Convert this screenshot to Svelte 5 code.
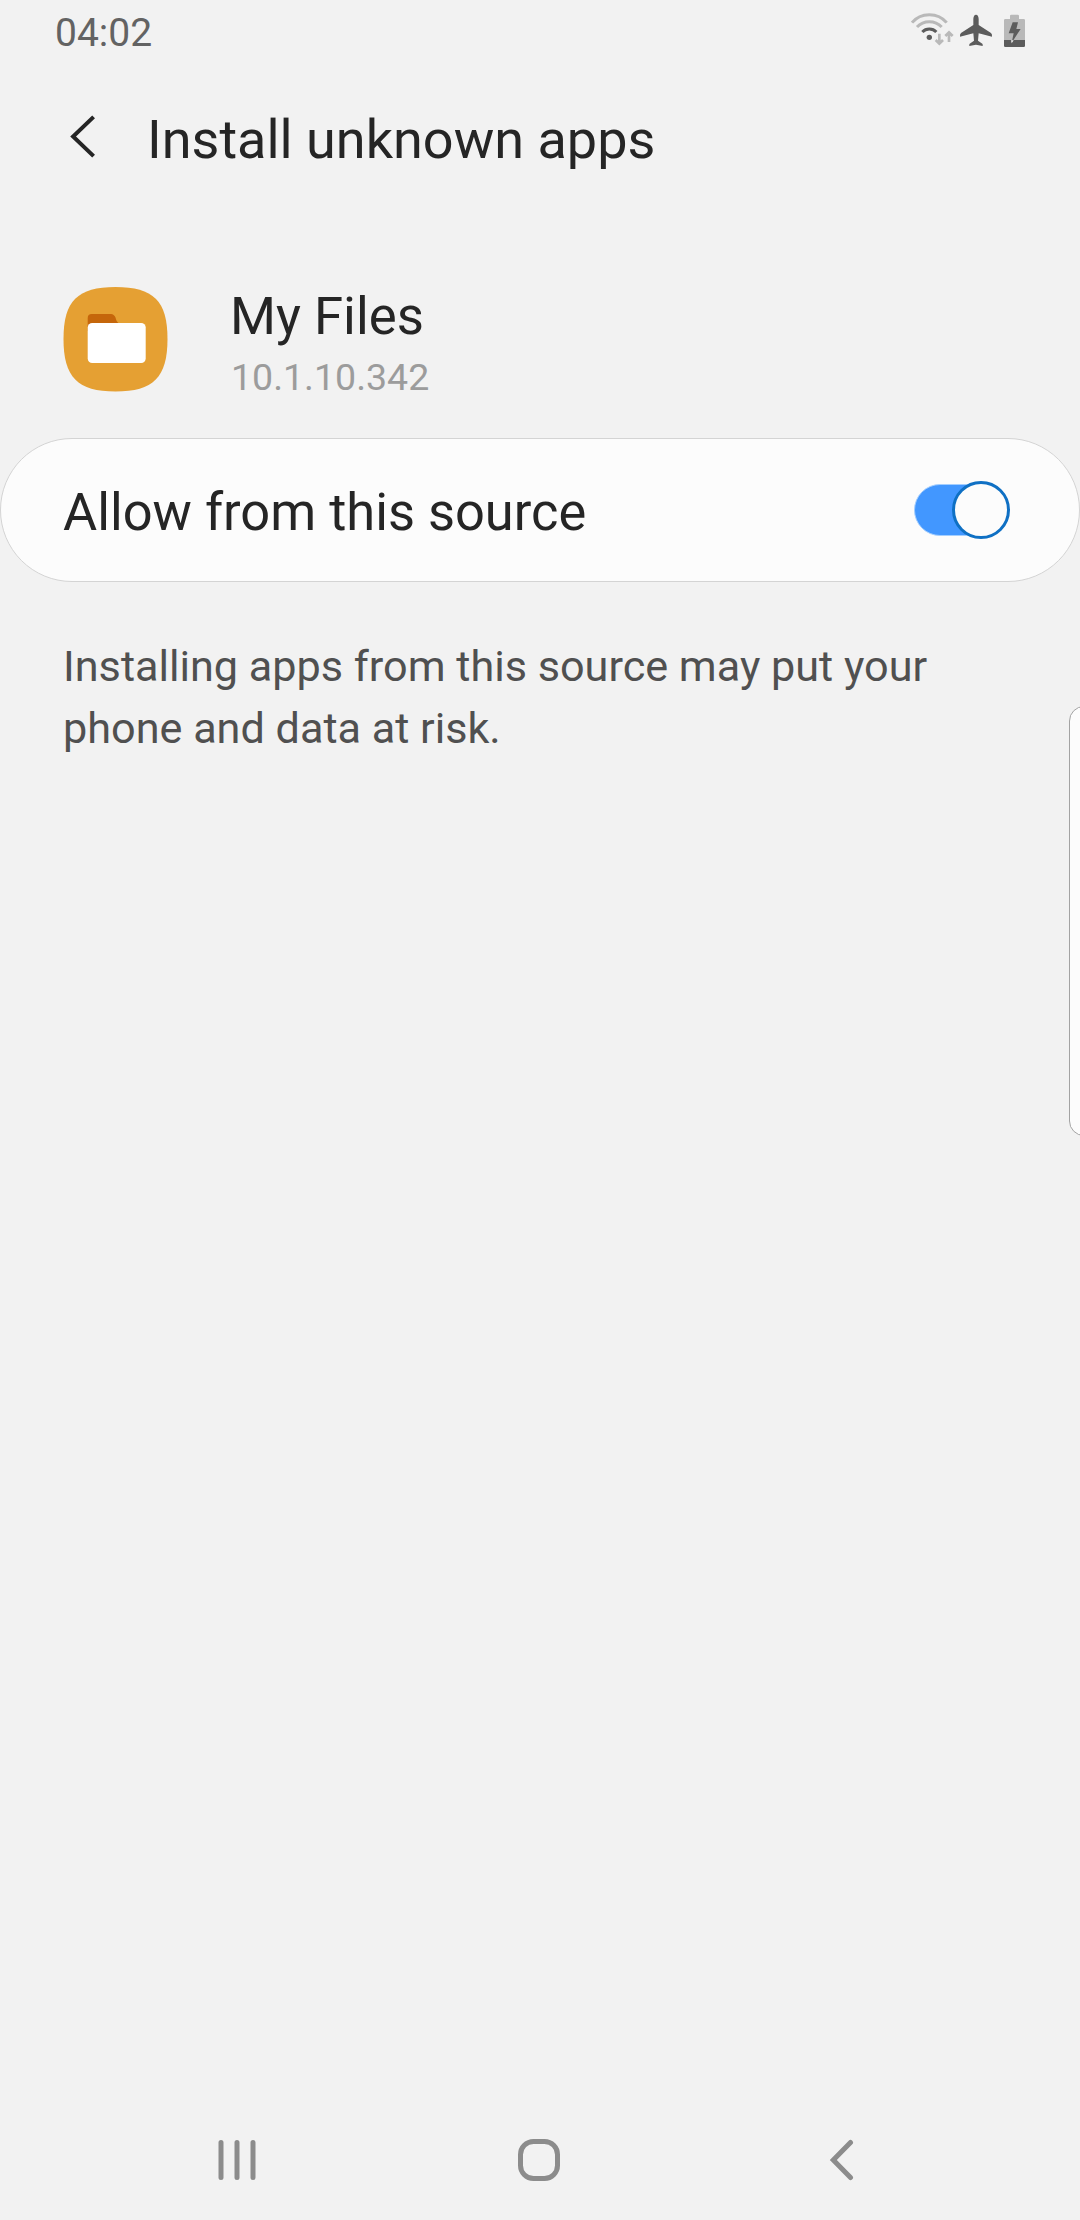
<script>
  let allowed = $state(true);
</script>

<div class="screen">
  <header class="status">
    <span class="time">04:02</span>
    <svg class="status-icons" width="140" height="60" viewBox="0 0 420 180" aria-hidden="true">
      <g fill="none" stroke-width="9">
        <path d="M36 68 C62 36 114 36 140 68" stroke="#b9b9b9" />
        <path d="M51 81 C71 60 105 60 125 81" stroke="#b9b9b9" />
        <path d="M67 96 C78 84 98 84 109 96" stroke="#5c5c5c" />
      </g>
      <circle cx="88" cy="112" r="8" fill="#5c5c5c" />
      <path d="M118 101V132M107 120L118 131L129 120M147 126V96M136 108L147 97L158 108" fill="none" stroke="#b9b9b9" stroke-width="8" />
      <path d="M228 44C233 44 236 50 236 57V75L273 99Q277 102 276 110L236 100L234 122L247 131Q249 134 248 138L228 134L208 138Q207 134 209 131L222 122L220 100L180 110Q179 102 183 99L220 75V57C220 50 223 44 228 44Z" fill="#5c5c5c" />
      <path d="M330 48Q330 44 334 44H353Q357 44 357 48V57H371Q375 57 375 61V121H312V61Q312 57 316 57H330Z" fill="#b9b9b9" />
      <path d="M312 120H375V137Q375 141 371 141H316Q312 141 312 137Z" fill="#5c5c5c" />
      <path d="M338 67H354L349 87H362L335 128L341 100H326Z" fill="#5c5c5c" />
      <path d="M333 121H341L335 130Z" fill="#f2f2f2" />
    </svg>
  </header>

  <div class="toolbar">
    <svg width="28" height="47" viewBox="0 0 28 47" aria-hidden="true">
      <path d="M24.600 3.900L4.100 23.500L24.600 43.100" fill="none" stroke="#252525" stroke-width="4" />
    </svg>
    <h1>Install unknown apps</h1>
  </div>

  <section class="app">
    <svg width="106" height="106" viewBox="0 0 106 106" aria-hidden="true">
      <path d="M53.500 1C91.500 1 105.500 15 105.500 53S91.500 105.500 53.500 105.500S1.500 91 1.500 53S15.500 1 53.500 1Z" fill="#e5a033" />
      <path d="M25.700 45V32Q25.700 28 29.700 28H49Q52 28 53.500 31.500Q54.500 36 57 37.500V45Z" fill="#c5660b" />
      <rect x="25.700" y="37" width="58" height="40" rx="4.500" fill="#fff" />
    </svg>
    <div class="app-text">
      <div class="name">My Files</div>
      <div class="version">10.1.10.342</div>
    </div>
  </section>

  <div class="card">
    <span class="label">Allow from this source</span>
    <button class="switch" class:on={allowed} role="switch" aria-checked={allowed} aria-label="Allow from this source" onclick={() => (allowed = !allowed)}>
      <span class="track"></span>
      <span class="thumb"></span>
    </button>
  </div>

  <p class="note">Installing apps from this source may put your phone and data at risk.</p>

  <div class="edge"></div>

  <nav>
    <svg width="40" height="42" viewBox="0 0 40 42" aria-hidden="true">
      <path d="M4 3.500V38.500M20 3.500V38.500M36 3.500V38.500" stroke="#8c8c8c" stroke-width="5" stroke-linecap="round" />
    </svg>
    <svg width="44" height="44" viewBox="0 0 44 44" aria-hidden="true">
      <rect x="3.500" y="3.500" width="37" height="37" rx="13" fill="none" stroke="#8c8c8c" stroke-width="5" />
    </svg>
    <svg width="34" height="42" viewBox="0 0 34 42" aria-hidden="true">
      <path d="M29.500 3.500L12.300 21L29.500 38.500" fill="none" stroke="#8c8c8c" stroke-width="5" stroke-linecap="round" />
    </svg>
  </nav>
</div>

<style>
  :global(body) { background: #f2f2f2; }
  .screen {
    position: relative;
    display: flex;
    flex-direction: column;
    width: 1080px;
    height: 2220px;
    overflow: hidden;
    background: #f2f2f2;
    font-family: Roboto, sans-serif;
    color: #252525;
  }
  .status {
    display: flex;
    justify-content: space-between;
    height: 66px;
    padding: 0 40px 0 55px;
  }
  .time { font-size: 39px; line-height: 66px; color: #636363; }
  .toolbar {
    display: flex;
    align-items: center;
    height: 141px;
    padding-left: 69px;
    gap: 50px;
  }
  h1 { margin: 0; padding-top: 6px; font-size: 54px; font-weight: 400; line-height: 63px; }
  .app {
    display: flex;
    align-items: flex-start;
    gap: 62px;
    box-sizing: border-box;
    height: 231px;
    padding: 77px 0 0 62px;
  }
  .app svg { margin-top: 2px; }
  .app-text { display: flex; flex-direction: column; gap: 3px; }
  .name { font-size: 52.7px; line-height: 64px; }
  .version { padding-left: 1px; font-size: 37.5px; line-height: 52px; color: #9c9c9c; }
  .card {
    display: flex;
    align-items: center;
    justify-content: space-between;
    box-sizing: border-box;
    height: 144px;
    padding: 0 69px 0 62px;
    border: 1px solid #d4d4d4;
    border-radius: 72px;
    background: #fcfcfc;
  }
  .label { padding-top: 4px; font-size: 52.4px; line-height: 64px; }
  .switch {
    display: flex;
    align-items: center;
    width: 96px;
    height: 58px;
    padding: 0;
    border: 0;
    background: none;
  }
  .track {
    box-sizing: border-box;
    width: 82px;
    height: 52px;
    border: 1px solid #b5b5b5;
    border-radius: 26px;
    background: #b5b5b5;
  }
  .on .track { border-color: #a3ceff; background: #4297ff; }
  .thumb {
    box-sizing: border-box;
    flex: none;
    width: 58px;
    height: 58px;
    margin-left: -82px;
    border: 3px solid #8c8c8c;
    border-radius: 50%;
    background: #fcfcfc;
  }
  .on .thumb { margin-left: -44px; border-color: #0f70c4; }
  .note {
    width: 900px;
    margin: 54px 0 0 63px;
    font-size: 43.2px;
    line-height: 62px;
    color: #505050;
  }
  .edge {
    position: absolute;
    top: 706px;
    right: -20px;
    box-sizing: border-box;
    width: 31px;
    height: 430px;
    border: 1px solid #a3a3a3;
    border-radius: 15px;
    background: #fcfcfc;
  }
  nav {
    display: flex;
    align-items: center;
    gap: 260px;
    height: 120px;
    margin-top: auto;
    padding-left: 217px;
  }
</style>
